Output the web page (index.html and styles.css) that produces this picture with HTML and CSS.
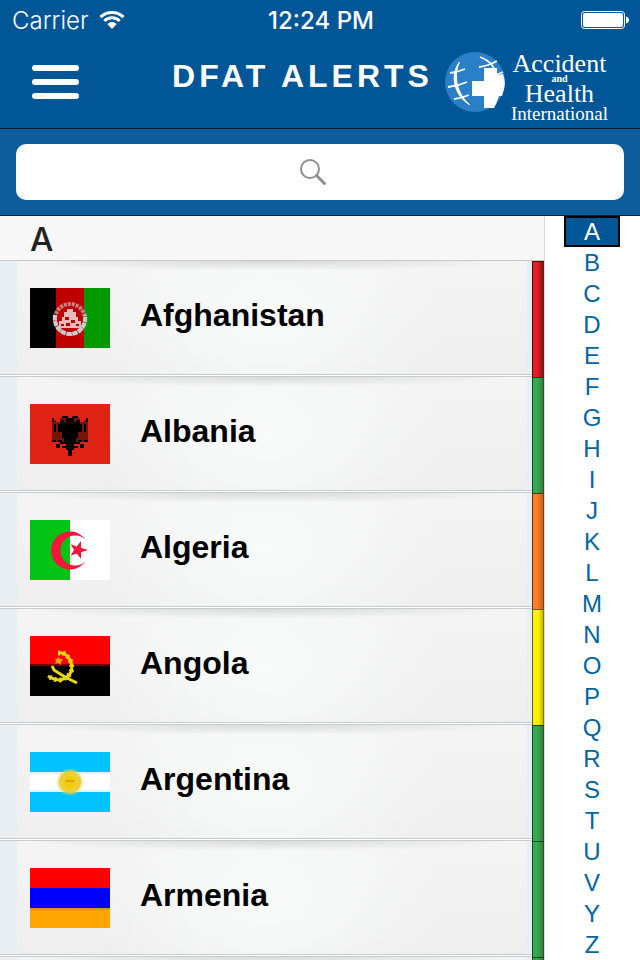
FILE: index.html
```
<!DOCTYPE html>
<html lang="en">
<head>
  <meta charset="UTF-8" />
  <meta name="viewport" content="width=device-width, initial-scale=1" />
  <title>DFAT Alerts</title>
  <link rel="stylesheet" href="styles.css">
</head>
<body>
  <header class="top">
    <div class="status-bar">
      <div class="carrier">
        <span>Carrier</span>
        <svg class="wifi" viewBox="0 0 26 18" width="26" height="18" aria-hidden="true">
          <path d="M1.500 6.200a16.500 16.500 0 0 1 23 0M5.300 10a11 11 0 0 1 15.400 0" fill="none" stroke="#fff" stroke-width="3" />
          <path d="M8.300 13a6.800 6.800 0 0 1 9.400 0L13 18z" fill="#fff" />
        </svg>
      </div>
      <div class="clock">12:24 PM</div>
      <div class="battery-wrap">
        <svg viewBox="0 0 50 20" width="50" height="20" role="img" aria-label="Battery full">
          <rect x="1.500" y="1.500" width="43" height="17" rx="3" fill="none" stroke="#fff" stroke-width="1" />
          <rect x="3" y="3" width="40" height="14" rx="2" fill="#fff" />
          <path d="M46 6.500c2 .5 3 2 3 3.500s-1 3-3 3.500z" fill="#fff" />
        </svg>
      </div>
    </div>
    <nav class="nav">
      <button class="menu-btn" aria-label="Menu">
        <span></span>
        <span></span>
        <span></span>
      </button>
      <h1 class="title">DFAT ALERTS</h1>
      <div class="logo">
        <svg viewBox="0 0 60 60" width="60" height="60" aria-hidden="true">
          <circle cx="30" cy="30" r="30" fill="#2b7fc6" />
          <path d="M14.500 10C5 22 8 43 25 53C12 42 8 24 14.500 10z" fill="#fff" stroke="#fff" stroke-width="1" />
          <path d="M5 21q8-1 15-4M3 35q10-1 19-5M9 47q8-1 15-4M34 15q9-1 18-6M50 23q4-1 8-3" fill="none" stroke="#fff" stroke-width="1.800" />
          <path d="M35 5Q46 9 50 18" fill="none" stroke="#fff" stroke-width="1.800" />
          <path d="M39 16h13v7l6-1q3 8 1 15l-2 7h-3q-2 7-5 12H39V44H27V29h12z" fill="#fff" />
        </svg>
        <div class="logo-text">
          <span class="logo-big">Accident</span>
          <span class="logo-and">and</span>
          <span class="logo-big">Health</span>
          <span class="logo-small">International</span>
        </div>
      </div>
    </nav>
  </header>

  <form class="search" role="search">
    <input type="search" class="search-input" aria-label="Search countries" />
    <svg class="search-icon" viewBox="0 0 28 28" width="28" height="28" aria-hidden="true">
      <circle cx="11" cy="11" r="9" fill="none" stroke="#8e8e93" stroke-width="2" />
      <path d="M17.500 17.500l8 8" stroke="#8e8e93" stroke-width="3" stroke-linecap="round" />
    </svg>
  </form>

  <main class="content">
    <section class="countries">
      <h2 class="letter">A</h2>
      <ul class="list">
        <li class="row">
          <a href="#afghanistan" class="country">
            <svg class="flag" viewBox="0 0 80 60" aria-hidden="true">
              <path fill="#000" d="M0 0h26v60H0z" />
              <path fill="#be0000" d="M26 0h28v60H26z" />
              <path fill="#090" d="M54 0h26v60H54z" />
              <circle cx="40" cy="31" r="15" fill="none" stroke="#c98080" stroke-width="4" stroke-dasharray="3 1" />
              <path d="M25 27q-1 8 3 13 5 6 12 6t12-6q4-5 3-13" fill="none" stroke="#ccc" stroke-width="4" stroke-dasharray="5 1" />
              <path d="M37 21h6v3h3v5h2v4h3v7H29v-7h3v-4h2v-5h3z" fill="#e9bcbc" />
              <path d="M35 29h4v3h-4zM41 32h4v3h-4zM36 35h4v3h-4zM31 36h3v2h-3zM46 36h3v2h-3z" fill="#be0000" />
            </svg>
            <span class="name">Afghanistan</span>
          </a>
          <span class="level level-red"></span>
        </li>
        <li class="row">
          <a href="#albania" class="country">
            <svg class="flag" viewBox="0 0 40 30" shape-rendering="crispEdges" aria-hidden="true">
              <path fill="#e02314" d="M0 0h40v30H0z" />
              <path fill="#75150c" d="M11 8h2v10h-2zM27 8h2v10h-2zM12 9h4v8h-4zM24 9h4v8h-4zM13 16h4v3h-4zM23 16h4v3h-4zM15 7h10v2h-10z" />
              <path fill="#000" d="M16 6h3v1h-3zM21 6h3v1h-3zM11 7h1v2h-1zM28 7h1v2h-1zM18 7h2v2h-2zM20 7h2v2h-2zM15 8h2v3h-2zM23 8h2v3h-2zM17 9h6v3h-6zM14 10h3v4h-3zM23 10h3v4h-3zM16 12h8v5h-8zM12 10h1v4h-1zM27 10h1v4h-1zM17 17h6v3h-6zM11 18h2v1h-2zM27 18h2v1h-2zM14 18h2v1h-2zM24 18h2v1h-2zM13 20h2v2h-2zM25 20h2v2h-2zM15 19h2v1h-2zM23 19h2v1h-2zM18 20h4v3h-4zM16 21h2v1h-2zM22 21h2v1h-2zM19 23h2v3h-2z" />
            </svg>
            <span class="name">Albania</span>
          </a>
          <span class="level level-green"></span>
        </li>
        <li class="row">
          <a href="#algeria" class="country">
            <svg class="flag" viewBox="0 0 80 60" aria-hidden="true">
              <path fill="#fff" d="M40 0h40v60H40z" />
              <path fill="#00c314" d="M0 0h40v60H0z" />
              <path fill="#f5163a" d="M55.500 19.500A19 19 0 1 0 55.500 41.500A15 15 0 1 1 55.500 19.500z" />
              <path fill="#f5163a" d="M58 30l-7 2.200v6.800l-4.300-5.400-6.200 2.200L44 30l-3.500-5.800 6.200 2.200 4.300-5.400v6.800z" />
            </svg>
            <span class="name">Algeria</span>
          </a>
          <span class="level level-orange"></span>
        </li>
        <li class="row">
          <a href="#angola" class="country">
            <svg class="flag" viewBox="0 0 80 60" aria-hidden="true">
              <path fill="#f00" d="M0 0h80v29H0z" />
              <path fill="#000" d="M0 29h80v31H0z" />
              <path fill="#700000" d="M0 28h80v2H0z" />
              <path d="M28 17h5q4 2 7 7 3 6 1 12-3 6-11 8-6 0-12-4" fill="none" stroke="#e8d80c" stroke-width="3" />
              <path d="M28 17h5q4 2 7 7 3 6 1 12-3 6-11 8-6 0-12-4" fill="none" stroke="#e8d80c" stroke-width="5" stroke-dasharray="2 3" />
              <path d="M22 30l2 4 11 7 12 6" fill="none" stroke="#e8d80c" stroke-width="3" />
              <path d="M28 21l2 2h3l-2 3v3l-3-2-3 1 1-3-1-2h2z" fill="#f5a008" />
            </svg>
            <span class="name">Angola</span>
          </a>
          <span class="level level-yellow"></span>
        </li>
        <li class="row">
          <a href="#argentina" class="country">
            <svg class="flag" viewBox="0 0 80 60" aria-hidden="true">
              <path fill="#00c3ff" d="M0 0h80v60H0z" />
              <path fill="#d9f6ff" d="M0 20h80v20H0z" />
              <path fill="#fff" d="M0 22h80v16H0z" />
              <circle cx="40" cy="30" r="13" fill="#f0d650" opacity=".5" />
              <circle cx="40" cy="30" r="11" fill="#ecd034" />
              <circle cx="40" cy="30" r="6" fill="#f2cc08" />
              <path fill="#d2a800" d="M36 28h8v2h-8z" />
            </svg>
            <span class="name">Argentina</span>
          </a>
          <span class="level level-green"></span>
        </li>
        <li class="row">
          <a href="#armenia" class="country">
            <svg class="flag" viewBox="0 0 80 60" aria-hidden="true">
              <path fill="#f00" d="M0 0h80v20H0z" />
              <path fill="#00f" d="M0 20h80v20H0z" />
              <path fill="#ffa500" d="M0 40h80v20H0z" />
              <path fill="#d8912d" d="M0 40h80v2H0z" />
            </svg>
            <span class="name">Armenia</span>
          </a>
          <span class="level level-green"></span>
        </li>
        <li class="row">
          <a href="#next" class="country" aria-label="Next country"></a>
          <span class="level level-green"></span>
        </li>
      </ul>
    </section>

    <nav class="index" aria-label="Alphabet">
      <a href="#a" class="active">A</a>
      <a href="#b">B</a>
      <a href="#c">C</a>
      <a href="#d">D</a>
      <a href="#e">E</a>
      <a href="#f">F</a>
      <a href="#g">G</a>
      <a href="#h">H</a>
      <a href="#i">I</a>
      <a href="#j">J</a>
      <a href="#k">K</a>
      <a href="#l">L</a>
      <a href="#m">M</a>
      <a href="#n">N</a>
      <a href="#o">O</a>
      <a href="#p">P</a>
      <a href="#q">Q</a>
      <a href="#r">R</a>
      <a href="#s">S</a>
      <a href="#t">T</a>
      <a href="#u">U</a>
      <a href="#v">V</a>
      <a href="#y">Y</a>
      <a href="#z">Z</a>
    </nav>
  </main>
</body>
</html>
```
FILE: styles.css
```
* {
  box-sizing: border-box;
}
body {
  display: flex;
  flex-direction: column;
  height: 100vh;
  margin: 0;
  overflow: hidden;
  font-family: "Liberation Sans", Arial, sans-serif;
  background: #fff;
  color: #000;
}
a {
  text-decoration: none;
}

/* header */
.top {
  background: #005697;
  color: #fff;
  border-bottom: 1px solid #04192b;
}
.status-bar {
  display: grid;
  grid-template-columns: 1fr auto 1fr;
  align-items: center;
  height: 40px;
  padding: 0 10px 0 12px;
  font-family: Inter, sans-serif;
  font-size: 24px;
}
.carrier {
  display: flex;
  align-items: center;
  gap: 10px;
  font-weight: 300;
}
.clock {
  font-weight: 500;
}
.battery-wrap {
  display: flex;
  justify-content: flex-end;
}
.nav {
  display: flex;
  align-items: center;
  gap: 12px;
  height: 88px;
  padding: 0 32px;
}
.menu-btn {
  display: flex;
  flex-direction: column;
  gap: 8px;
  width: 47px;
  margin: 0 0 4px;
  padding: 0;
  border: none;
  background: none;
  cursor: pointer;
}
.menu-btn span {
  width: 100%;
  height: 6px;
  border-radius: 3px;
  background: #fff;
}
.title {
  margin: 0 0 16px auto;
  font-size: 32px;
  line-height: 36px;
  letter-spacing: 4px;
  white-space: nowrap;
}
.logo {
  display: flex;
  align-items: center;
  gap: 6px;
  margin-bottom: 4px;
}
.logo-text {
  display: flex;
  flex-direction: column;
  align-items: center;
  gap: 1px;
  padding-top: 10px;
  font-family: "Liberation Serif", "Times New Roman", serif;
}
.logo-big {
  font-size: 26px;
  line-height: 22px;
}
.logo-and {
  font-size: 10px;
  font-weight: bold;
  line-height: 6px;
}
.logo-small {
  font-size: 19px;
  line-height: 16px;
}

/* search */
.search {
  position: relative;
  padding: 15px 16px;
  background: #0d5c9b;
  border-bottom: 1px solid #04233c;
}
.search-input {
  display: block;
  width: 100%;
  height: 56px;
  padding: 0 16px;
  border: none;
  border-radius: 10px;
  background: #fff;
  font-size: 28px;
  appearance: none;
}
.search-icon {
  position: absolute;
  top: 29px;
  left: calc(50% - 21px);
}

/* country list */
.content {
  display: flex;
  flex: 1;
  min-height: 0;
}
.countries {
  flex: 1;
  border-right: 1px solid #d9d9d9;
  overflow: hidden;
}
.letter {
  height: 45px;
  margin: 0;
  padding-left: 30px;
  border-bottom: 1px solid #c8c8c8;
  background: #f7f7f7;
  color: #222;
  font-family: Inter, sans-serif;
  font-size: 33px;
  font-weight: 500;
  line-height: 46px;
}
.list {
  margin: 0;
  padding: 0;
  list-style: none;
}
.row {
  display: flex;
  height: 116px;
}
.country {
  display: flex;
  flex: 1;
  align-items: center;
  gap: 30px;
  padding: 0 0 2px 30px;
  border-bottom: 1px solid #c9cccc;
  background:
    linear-gradient(#e9eef2, #e9eef2) 0 0 / 17px 100% no-repeat,
    linear-gradient(#e9eef2, #e9eef2) 100% 0 / 5px 100% no-repeat,
    radial-gradient(ellipse 46% 10px at 50% 0, rgba(0, 0, 0, 0.12), transparent),
    radial-gradient(ellipse 34% 110% at 50% 50%, #f9fafa, rgba(249, 250, 250, 0)),
    linear-gradient(#f4f4f4, #eeeeee);
  box-shadow: inset 0 -1px 0 #fff, inset 0 -2px 0 #c9cccc;
  color: #000;
}
.flag {
  width: 80px;
  height: 60px;
}
.name {
  padding-bottom: 6px;
  font-size: 32px;
  font-weight: bold;
  line-height: 40px;
}
.level {
  width: 12px;
  border: 1px solid rgba(0, 0, 0, 0.5);
  border-top-color: rgba(0, 0, 0, 0.6);
  border-bottom: none;
}
.level-red {
  background: linear-gradient(to right, #ed1c24 40%, #7d1a1d);
}
.level-green {
  background: linear-gradient(to right, #2fb050 40%, #3f7a3a);
}
.level-orange {
  background: linear-gradient(to right, #ff7f27 40%, #c8611f);
}
.level-yellow {
  background: linear-gradient(to right, #fff200 50%, #c9b800);
}

/* alphabet */
.index {
  display: flex;
  flex-direction: column;
  align-items: center;
  width: 95px;
  padding-right: 1px;
}
.index a {
  width: 56px;
  color: #0065a4;
  font-size: 24px;
  line-height: 31px;
  text-align: center;
}
.index .active {
  border: 2px solid #000;
  background: #005697;
  color: #fff;
  line-height: 27px;
}
```
